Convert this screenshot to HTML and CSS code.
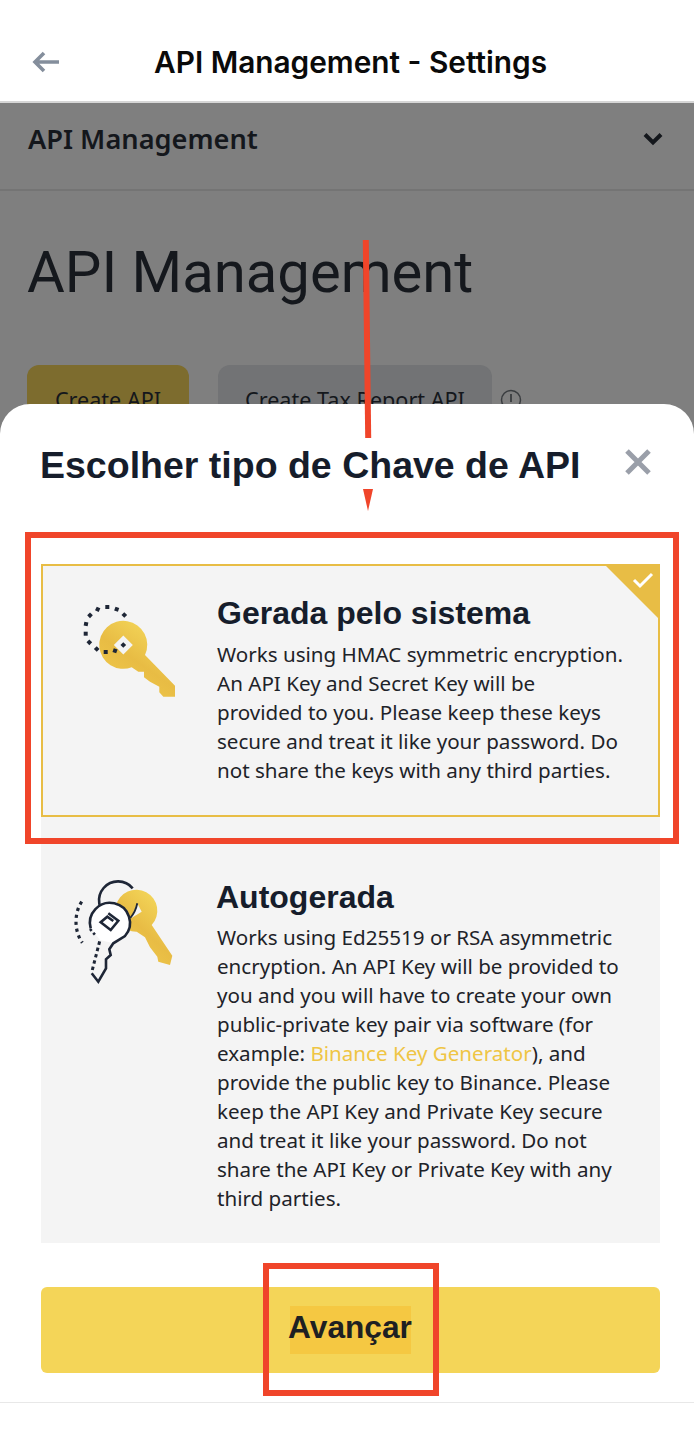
FILE: index.html
```html
<!DOCTYPE html>
<html lang="en">
<head>
<meta charset="utf-8">
<title>API Management - Settings</title>
<link rel="stylesheet" href="styles.css">
</head>
<body>
<div class="page">
  <header class="topbar">
    <svg class="back" viewBox="0 0 30 24" width="30" height="24"><path d="M28 12H4M13 3l-9 9 9 9" fill="none" stroke="#848e9c" stroke-width="3.6"/></svg>
    <h1 class="topbar-title">API Management - Settings</h1>
  </header>
  <div class="under">
    <div class="subnav">
      <span>API Management</span>
      <svg viewBox="0 0 20 14" width="20" height="14"><path d="M2 2.500l8 8 8-8" fill="none" stroke="#14171c" stroke-width="4"/></svg>
    </div>
    <div class="hero">
      <div class="hero-title">API Management</div>
      <div class="hero-actions">
        <span class="btn-primary">Create API</span>
        <span class="btn-muted">Create Tax Report API</span>
        <svg viewBox="0 0 22 22" width="22" height="22"><circle cx="11" cy="11" r="9.500" fill="none" stroke="#3a3d40" stroke-width="1.500"/><path d="M11 5v8" stroke="#3a3d40" stroke-width="1.800"/></svg>
      </div>
    </div>
  </div>

  <section class="sheet">
    <div class="sheet-head">
      <h2>Escolher tipo de Chave de API</h2>
      <svg class="close" viewBox="0 0 28 28" width="28" height="28"><path d="M3 3l22 22M25 3L3 25" stroke="#9a9fa9" stroke-width="5"/></svg>
    </div>

    <article class="card card-selected">
      <svg class="card-icon" viewBox="0 0 100 100" width="100" height="100">
        <defs><linearGradient id="g1" x1="0.9" y1="0" x2="0.2" y2="1"><stop offset="0" stop-color="#f7de60"/><stop offset="0.55" stop-color="#e8bc44"/><stop offset="1" stop-color="#f1cb4c"/></linearGradient></defs>
        <path d="M48.700 62.300A24 24 0 1 1 62 50L92 80.700V91.700H80.300L76.300 87.300V81.700L67 76.700 61 72.300V66.700H55.300z" fill="url(#g1)"/>
        <path d="M40.300 30.500l9.500 9.500-9.500 9.500-9.500-9.500z" fill="#f4f4f4"/>
        <g fill="#1e2636">
          <rect x="38.300" y="38" width="4" height="4" transform="rotate(45 40.300 40)"/>
          <rect x="30" y="43.700" width="4" height="4" transform="rotate(20 32 45.700)"/>
          <rect x="20.700" y="45" width="4" height="4"/>
          <rect x="11.700" y="42" width="4" height="4" transform="rotate(45 13.700 44)"/>
          <rect x="4.300" y="35.300" width="4" height="4" transform="rotate(45 6.300 37.300)"/>
          <rect x="0.700" y="26.700" width="4" height="4"/>
          <rect x="1" y="17" width="4" height="4" transform="rotate(10 3 19)"/>
          <rect x="5" y="8.300" width="4" height="4" transform="rotate(45 7 10.300)"/>
          <rect x="12.700" y="2.300" width="4" height="4" transform="rotate(25 14.700 4.300)"/>
          <rect x="22.300" y="0" width="4" height="4"/>
          <rect x="31.700" y="2.300" width="4" height="4" transform="rotate(20 33.700 4.300)"/>
          <rect x="39.300" y="8" width="4" height="4" transform="rotate(45 41.300 10)"/>
        </g>
      </svg>
      <div class="card-body">
        <h3>Gerada pelo sistema</h3>
        <p>Works using HMAC symmetric encryption. An API Key and Secret Key will be provided to you. Please keep these keys secure and treat it like your password. Do not share the keys with any third parties.</p>
      </div>
      <span class="corner"></span>
      <svg class="tick" viewBox="0 0 22 18" width="22" height="18"><path d="M2 9l6 6L20 3" fill="none" stroke="#fff" stroke-width="3"/></svg>
    </article>

    <article class="card card-plain">
      <svg class="card-icon" viewBox="0 0 110 120" width="110" height="120">
        <defs><linearGradient id="g2" x1="0.9" y1="0" x2="0.2" y2="1"><stop offset="0" stop-color="#f7de60"/><stop offset="0.55" stop-color="#e8bc44"/><stop offset="1" stop-color="#f1cb4c"/></linearGradient></defs>
        <path d="M63.700 56.700A21 21 0 1 1 78.700 50L99.300 80.700 97 90 85.300 86.700 84.300 81.700 77 72.300 72 62.300z" fill="url(#g2)"/>
        <path d="M64.300 28.300l4.400 8.400-10.700 6.600z" fill="#f4f4f4"/>
        <path d="M64.300 28.300c-1 5-3 10-7 14.700" fill="none" stroke="#1e2636" stroke-width="1.800"/>
        <path d="M59.700 13.300A19 19 0 1 0 35.300 41.700" fill="none" stroke="#1e2636" stroke-width="2.600"/>
        <path d="M17.700 53.300A20 20 0 1 1 52 61L40.300 68.300 27 65z" fill="#fff"/>
        <path d="M17.700 53.300A20 20 0 1 1 52 61L40.300 68.300 36.300 74.300 37.700 80 33 84.300 33 93.300 25.300 106.700 18.700 98.300" fill="none" stroke="#1e2636" stroke-width="2.600"/>
        <path d="M35.300 38.300L45.300 45.700 37.700 55 27.700 47.300 34.300 41.700 40.300 46" fill="none" stroke="#1e2636" stroke-width="2.600"/>
        <path d="M19.300 95L27 65" fill="none" stroke="#1e2636" stroke-width="3" stroke-dasharray="3.500 3"/>
        <path d="M8.700 26.700C1 38 1 56 9.300 67.700" fill="none" stroke="#1e2636" stroke-width="3.200" stroke-dasharray="3.200 3.800"/>
        <path d="M17 54l6 7" fill="none" stroke="#1e2636" stroke-width="2.600" stroke-dasharray="2.500 2.500"/>
      </svg>
      <div class="card-body">
        <h3>Autogerada</h3>
        <p>Works using Ed25519 or RSA asymmetric encryption. An API Key will be provided to you and you will have to create your own public-private key pair via software (for example: <a class="link">Binance Key Generator</a>), and provide the public key to Binance. Please keep the API Key and Private Key secure and treat it like your password. Do not share the API Key or Private Key with any third parties.</p>
      </div>
    </article>

    <div class="cta"><span class="cta-label">Avançar</span></div>
    <div class="sheet-foot"></div>
  </section>

  <i class="mark mark-line"></i>
  <i class="mark mark-head"></i>
  <i class="mark mark-box-a"></i>
  <i class="mark mark-box-b"></i>
</div>
</body>
</html>
```
FILE: styles.css
```css
* { box-sizing: border-box; }
html, body { margin: 0; padding: 0; background: #fff; }
.page {
  position: relative;
  width: 694px;
  height: 1432px;
  overflow: hidden;
  font-family: "Liberation Sans", Arial, sans-serif;
}
.topbar {
  height: 103px;
  padding: 22px 0 0 31px;
  display: flex;
  align-items: center;
  background: #fff;
  border-bottom: 2px solid #d6d6d6;
}
.back { flex: none; }
.topbar-title {
  margin: 0 0 0 93px;
  font: 600 29.800px/40px Inter, sans-serif;
  color: #0a0a0a;
  white-space: nowrap;
}
.under {
  height: 1329px;
  background: #7f7f7f;
  font-family: "Noto Sans", sans-serif;
  color: #14171c;
}
.subnav {
  height: 88px;
  padding: 0 31px 14px 28px;
  display: flex;
  align-items: center;
  justify-content: space-between;
  font: 600 27.200px/36px "Noto Sans", sans-serif;
  border-bottom: 2px solid #747474;
}
.hero { padding: 41px 27px 0; }
.hero-title {
  font: 400 58px/80px Roboto, sans-serif;
  color: #15181d;
}
.hero-actions {
  margin-top: 53px;
  display: flex;
  align-items: flex-start;
  gap: 29px;
  font: 400 21.600px/70px "Noto Sans", sans-serif;
}
.hero-actions svg { margin: 24px 0 0 -21px; }
.btn-primary {
  width: 162px;
  height: 70px;
  text-align: center;
  background: #7d6c2e;
  border-radius: 12px;
}
.btn-muted {
  width: 274px;
  height: 70px;
  text-align: center;
  background: #727375;
  border-radius: 12px;
}
.sheet {
  position: absolute;
  left: 0;
  right: 0;
  top: 404px;
  bottom: 0;
  padding: 0 34px 0 41px;
  background: #fff;
  border-radius: 30px 30px 0 0;
}
.sheet-head {
  height: 160px;
  margin-left: -1px;
  padding-bottom: 39px;
  display: flex;
  align-items: center;
  justify-content: space-between;
}
.sheet-head h2 {
  margin: 0;
  font: 700 37.500px/44px "Liberation Sans", Arial, sans-serif;
  color: #161d2b;
  white-space: nowrap;
}
.close { margin: -6px 8px 0 0; }
.card {
  position: relative;
  display: flex;
  background: #f4f4f4;
}
.card-selected {
  height: 253px;
  padding: 22px 20px 0 40px;
  border: 2px solid #e8bd45;
}
.card-plain {
  height: 426px;
  padding: 55px 20px 0 32px;
}
.card-icon { flex: none; }
.card-selected .card-icon { margin-top: 17px; }
.card-plain .card-icon { margin-top: 3px; }
.card-body { flex: none; width: 408px; margin-left: 34px; }
.card-body h3 {
  margin: 0 0 2px;
  font: 700 32px/50px "Liberation Sans", Arial, sans-serif;
  color: #161d2b;
  white-space: nowrap;
}
.card-plain .card-body h3 { margin: 0 0 1px -1px; }
.card-body p {
  margin: 0;
  font: 400 20.600px/29px "Noto Sans", sans-serif;
  color: #1e2329;
}
.link { color: #efc544; }
.corner {
  position: absolute;
  top: 0;
  right: 0;
  width: 0;
  height: 0;
  border-top: 52px solid #e8bd45;
  border-left: 52px solid transparent;
}
.tick { position: absolute; top: 5px; right: 4px; }
.cta {
  height: 86px;
  margin-top: 44px;
  display: flex;
  align-items: center;
  justify-content: center;
  background: #f4d558;
  border-radius: 6px;
}
.cta-label {
  width: 121px;
  height: 48px;
  padding: 0 1px 5px 0;
  display: flex;
  align-items: center;
  justify-content: center;
  background: #f5c842;
  font: 700 31.700px/43px "Liberation Sans", Arial, sans-serif;
  color: #1e2022;
  white-space: nowrap;
}
.sheet-foot {
  height: 1px;
  margin: 29px -34px 0 -41px;
  background: #e8e8e8;
}
.mark { position: absolute; display: block; }
.mark-line {
  left: 364px;
  top: 240px;
  width: 6px;
  height: 198px;
  background: #f0452a;
  transform: rotate(-0.7deg);
}
.mark-head {
  left: 363px;
  top: 489px;
  width: 0;
  height: 0;
  border-top: 22px solid #f0452a;
  border-left: 5px solid transparent;
  border-right: 5px solid transparent;
}
.mark-box-a { left: 25px; top: 532px; width: 654px; height: 312px; border: 6px solid #f0452a; }
.mark-box-b { left: 263px; top: 1263px; width: 176px; height: 133px; border: 6px solid #f0452a; }
```
